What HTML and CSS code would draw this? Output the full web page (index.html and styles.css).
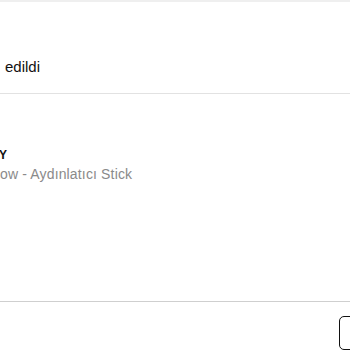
FILE: index.html
```html
<!DOCTYPE html>
<html lang="tr">
<head>
<meta charset="utf-8">
<link rel="stylesheet" href="styles.css">
</head>
<body>
<div class="modal">
  <div class="topband"></div>
  <div class="header">
    <div class="title">edildi</div>
  </div>
  <div class="item">
    <div class="brand">Y</div>
    <div class="name">ow - Aydınlatıcı Stick</div>
  </div>
  <div class="footer">
    <div class="btn"></div>
  </div>
</div>
</body>
</html>
```

FILE: styles.css
```css
html, body {
  margin: 0;
  padding: 0;
  background: #fff;
  width: 350px;
  height: 350px;
  overflow: hidden;
}
.modal {
  font-family: "Liberation Sans", Arial, sans-serif;
  color: #111;
}
.topband {
  height: 2px;
  background: #efefef;
}
.header {
  height: 92px;
  border-bottom: 1px solid #e2e2e2;
  display: flex;
  align-items: flex-end;
  padding-left: 5px;
  box-sizing: border-box;
  padding-bottom: 17px;
}
.title {
  font-size: 15px;
  line-height: 18px;
}
.item {
  height: 208px;
  padding-top: 55px;
  box-sizing: border-box;
  border-bottom: 1px solid #cfcfcf;
}
.brand {
  font-size: 12px;
  font-weight: bold;
  line-height: 12px;
  margin-left: -1px;
}
.name {
  font-size: 14px;
  letter-spacing: 0.15px;
  color: #8a8a8a;
  line-height: 18px;
  margin-top: 4px;
}
.footer {
  display: flex;
  justify-content: flex-end;
  padding-top: 14px;
}
.btn {
  width: 20px;
  height: 32px;
  margin-right: -11px;
  border: 1.5px solid #111;
  border-radius: 5px;
}
```
